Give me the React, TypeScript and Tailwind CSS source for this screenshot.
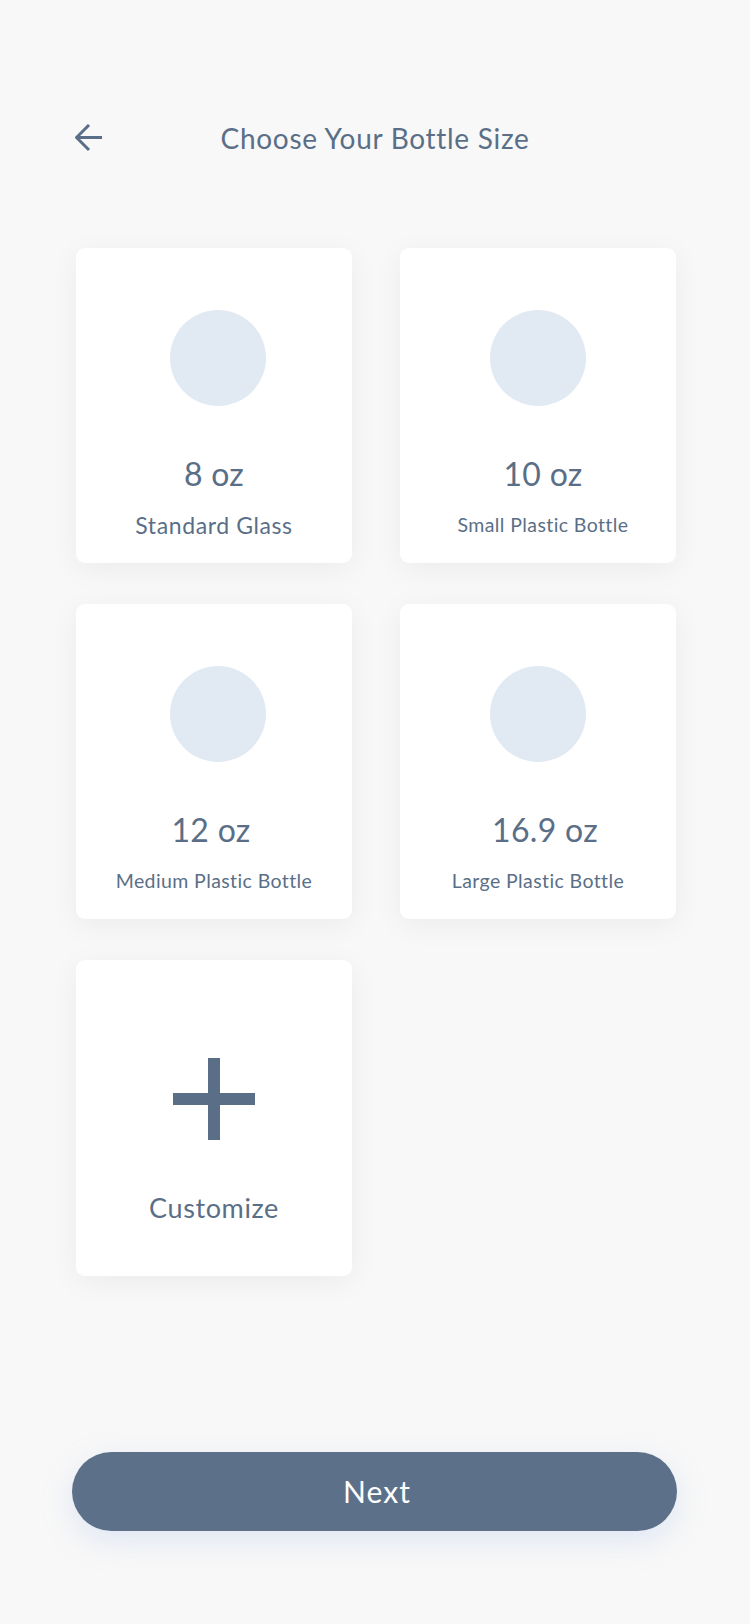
import React from "react";

const font = { fontFamily: "Lato, 'Open Sans', sans-serif" };

type Item = { amount: string; label: string; small?: boolean; left?: boolean; shift: string; lshift?: string };

const items: Item[] = [
  { amount: "8 oz", label: "Standard Glass", left: true, shift: "translate-x-0" },
  { amount: "10 oz", label: "Small Plastic Bottle", small: true, shift: "translate-x-[5px]", lshift: "translate-x-[5px]" },
  { amount: "12 oz", label: "Medium Plastic Bottle", small: true, left: true, shift: "-translate-x-[3px]" },
  { amount: "16.9 oz", label: "Large Plastic Bottle", small: true, shift: "translate-x-[7px]" },
];

function Card({ item }: { item: Item }) {
  return (
    <div className="flex h-[315px] w-[276px] flex-col items-center rounded-[9px] bg-white pt-[62px] shadow-[0_6px_30px_rgba(0,0,0,0.055)]">
      <div className={`h-[96px] w-[96px] rounded-full bg-[#e1e9f2] ${item.left ? "translate-x-[4px]" : ""}`} />
      <div className={`mt-[48px] h-[40px] text-[32px] leading-[40px] tracking-[0.3px] text-[#5a6f87] ${item.shift}`}>
        {item.amount}
      </div>
      <div
        className={`mt-[19px] h-[24px] leading-[24px] text-[#5a6f87] ${item.lshift ?? ""} ${
          item.small ? "text-[19.5px] tracking-[0.4px]" : "text-[23px] tracking-[0.6px]"
        }`}
      >
        {item.label}
      </div>
    </div>
  );
}

export default function App() {
  return (
    <div className="flex h-[1624px] w-[750px] flex-col bg-[#f8f8f8]" style={font}>
      <div className="relative mt-[118px] flex h-[40px] items-center justify-center">
        <button className="absolute left-[75px] top-[6px] h-[28px] w-[28px]">
          <svg width="28" height="28" viewBox="0 0 28 28" fill="none">
            <path d="M27 13.5H2M14 1L1.5 13.5L14 26" stroke="#5a6f87" strokeWidth="3" />
          </svg>
        </button>
        <h1 className="text-[28px] font-normal leading-[40px] tracking-[0.7px] text-[#5a6f87]">Choose Your Bottle Size</h1>
      </div>

      <div className="mt-[90px] grid grid-cols-[276px_276px] gap-x-[48px] gap-y-[41px] pl-[76px]">
        {items.map((it) => (
          <Card key={it.amount} item={it} />
        ))}
        <div className="flex h-[316px] w-[276px] flex-col items-center rounded-[9px] bg-white pt-[98px] shadow-[0_6px_30px_rgba(0,0,0,0.055)]">
          <svg width="82" height="82" viewBox="0 0 82 82">
            <rect x="35" y="0" width="12" height="82" fill="#5a6f87" />
            <rect x="0" y="35" width="82" height="12" fill="#5a6f87" />
          </svg>
          <div className="mt-[52px] h-[32px] text-[27px] leading-[32px] tracking-[0.6px] text-[#5a6f87]">Customize</div>
        </div>
      </div>

      <div className="mt-auto mb-[93px] px-[72px] pr-[73px]">
        <button className="flex h-[79px] w-full items-center justify-center rounded-full bg-[#5c7189] pl-[5px] text-[30px] tracking-[1px] text-white shadow-[0_10px_30px_rgba(150,180,230,0.25)]">
          Next
        </button>
      </div>
    </div>
  );
}
